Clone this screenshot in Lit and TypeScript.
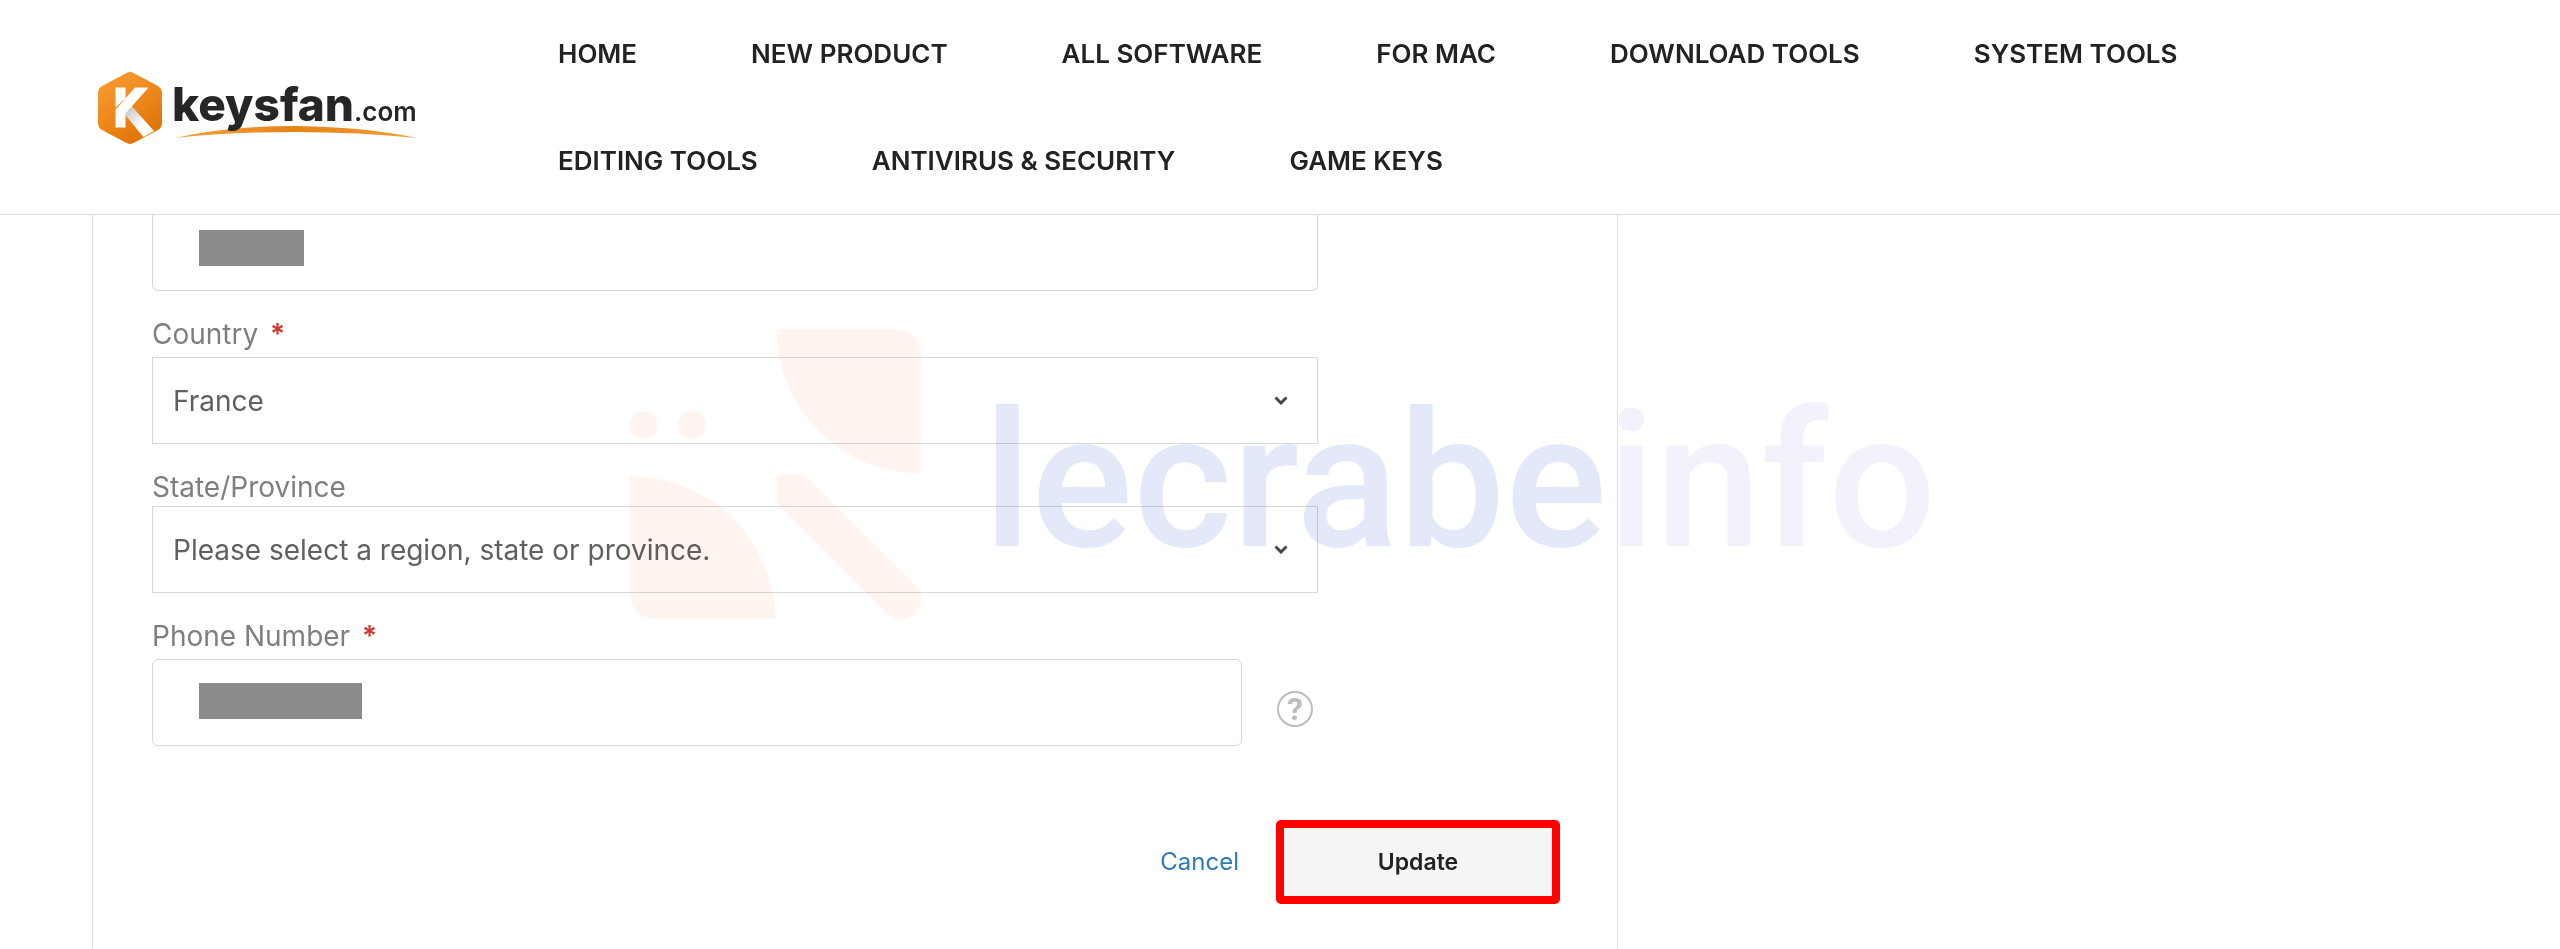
import { LitElement, html, css } from "lit";
import { customElement } from "lit/decorators.js";

const NAV = [
  "HOME",
  "NEW PRODUCT",
  "ALL SOFTWARE",
  "FOR MAC",
  "DOWNLOAD TOOLS",
  "SYSTEM TOOLS",
  "EDITING TOOLS",
  "ANTIVIRUS & SECURITY",
  "GAME KEYS",
];

@customElement("site-header")
export class SiteHeader extends LitElement {
  static styles = css`
    :host {
      display: block;
      border-bottom: 1px solid #dedede;
      background: #fff;
    }
    .bar {
      display: flex;
      align-items: center;
      gap: 140px;
      padding: 0 92px 0 98px;
    }
    .logo {
      flex: none;
      display: block;
    }
    .logo svg {
      display: block;
    }
    .word {
      font-family: Inter, "Open Sans", sans-serif;
      fill: #262626;
    }
    .name {
      font-size: 46px;
      font-weight: 800;
    }
    .tld {
      font-size: 26px;
      font-weight: 600;
    }
    .menu {
      display: flex;
      flex-wrap: wrap;
      column-gap: 114px;
      list-style: none;
      margin: 0;
      padding: 0;
      max-width: 1800px;
    }
    .item {
      color: #222;
      font: 600 26px/107px Inter, "Open Sans", sans-serif;
      text-decoration: none;
      white-space: nowrap;
    }
  `;

  render() {
    return html`
      <header class="bar">
        <a class="logo" href="#" aria-label="keysfan.com">
          <svg width="320" height="76" viewBox="0 0 320 76">
            <defs>
              <linearGradient id="hex" x1="0" y1="0" x2="0.6" y2="1">
                <stop offset="0" stop-color="#f7a13c" />
                <stop offset="0.5" stop-color="#f08a1c" />
                <stop offset="1" stop-color="#e07408" />
              </linearGradient>
              <linearGradient id="leg" x1="0" y1="0" x2="1" y2="1">
                <stop offset="0.15" stop-color="#cfcfcf" />
                <stop offset="0.6" stop-color="#ffffff" />
              </linearGradient>
              <linearGradient id="swoosh" x1="0" y1="0" x2="1" y2="0">
                <stop offset="0" stop-color="#f3a23d" />
                <stop offset="0.5" stop-color="#e98317" />
                <stop offset="1" stop-color="#f0a040" />
              </linearGradient>
            </defs>
            <path
              fill="url(#hex)"
              d="M28 4.200Q32 2 36 4.200L60 17Q64 19.500 64 24V54Q64 58.500 60 61L36 73.800Q32 76 28 73.800L4 61Q0 58.500 0 54V24Q0 19.500 4 17Z"
            />
            <path fill="url(#leg)" d="M26.500 45L34 37.500L56 62L45.500 68Z" />
            <path fill="#fff" d="M17.500 18.500H27.500V29L17.500 38.500Z" />
            <path fill="#fff" d="M37 18.500H50.500L27.500 44.500V58.500H17.500V40.500Z" />
            <path fill="url(#swoosh)" d="M77 69Q130 57 198 57Q270 58 319 69Q260 63 198 63Q130 63 77 69Z" />
            <text class="word" y="52">
              <tspan class="name" x="74">keysfan</tspan><tspan class="tld">.com</tspan>
            </text>
          </svg>
        </a>
        <nav aria-label="Main">
          <ul class="menu">
            ${NAV.map((label) => html`<li><a class="item" href="#">${label}</a></li>`)}
          </ul>
        </nav>
      </header>
    `;
  }
}

@customElement("address-form")
export class AddressForm extends LitElement {
  static styles = css`
    :host {
      flex: 1;
      display: block;
      box-sizing: border-box;
      max-width: 1526px;
      margin: 0 92px;
      padding: 0 57px 44px 59px;
      border: 1px solid #dedede;
      border-width: 0 1px;
      font-family: Inter, "Open Sans", sans-serif;
    }
    .fields {
      display: grid;
      gap: 24px;
      max-width: 1166px;
    }
    .label {
      display: block;
      color: #7d7f82;
      font-size: 28px;
      line-height: 38px;
    }
    .required {
      padding-bottom: 4px;
    }
    .star {
      margin-left: 4px;
      color: #d1372f;
      font-weight: 600;
    }
    .control {
      display: grid;
      align-items: center;
    }
    .control > * {
      grid-area: 1 / 1;
    }
    .box {
      box-sizing: border-box;
      width: 100%;
      height: 87px;
      margin: 0;
      padding: 0 20px;
      border: 1px solid #d8d8d8;
      background: #fff;
      color: #5f6062;
      font: 400 28px/36px Inter, "Open Sans", sans-serif;
      appearance: none;
    }
    .rounded {
      border-radius: 6px;
    }
    .cut {
      height: 76px;
      border-top: 0;
      border-radius: 0 0 6px 6px;
    }
    .mask {
      width: 105px;
      height: 36px;
      margin: 0 0 10px 47px;
      background: #8c8b89;
      pointer-events: none;
    }
    .long {
      width: 163px;
      margin-bottom: 3px;
    }
    .chevron {
      justify-self: end;
      margin-right: 30px;
      pointer-events: none;
    }
    .phone {
      display: flex;
      align-items: center;
      gap: 35px;
    }
    .phone .control {
      flex: 1;
    }
    .help {
      display: block;
      padding: 12px 5px 0 0;
      border: 0;
      background: none;
    }
    .help svg {
      display: block;
    }
    .help text {
      font: 700 32px Roboto, sans-serif;
      fill: #bdbdbd;
    }
    .actions {
      display: flex;
      justify-content: flex-end;
      align-items: center;
      gap: 37px;
      margin-top: 74px;
    }
    .cancel {
      color: #2b7bb9;
      font-size: 24px;
      line-height: 32px;
      text-decoration: none;
    }
    .update {
      box-sizing: border-box;
      width: 284px;
      height: 84px;
      border: 8px solid #fe0000;
      border-radius: 5px;
      background: #f5f5f5;
      color: #222;
      font: 600 23px/32px Inter, "Open Sans", sans-serif;
    }
  `;

  private chevron() {
    return html`<svg class="chevron" width="14" height="9" viewBox="0 0 14 9" aria-hidden="true">
      <path d="M1.500 1.500L7 7L12.500 1.500" fill="none" stroke="#484848" stroke-width="3" />
    </svg>`;
  }

  render() {
    return html`
      <form>
        <div class="fields">
          <div class="control">
            <input class="box cut" type="text" aria-label="Zip/Postal Code" />
            <span class="mask"></span>
          </div>
          <div>
            <label class="label required" for="country">Country <span class="star">*</span></label>
            <div class="control">
              <select class="box" id="country">
                <option>France</option>
              </select>
              ${this.chevron()}
            </div>
          </div>
          <div>
            <label class="label" for="region">State/Province</label>
            <div class="control">
              <select class="box" id="region">
                <option>Please select a region, state or province.</option>
              </select>
              ${this.chevron()}
            </div>
          </div>
          <div>
            <label class="label required" for="phone">Phone Number <span class="star">*</span></label>
            <div class="phone">
              <div class="control">
                <input class="box rounded" id="phone" type="tel" />
                <span class="mask long"></span>
              </div>
              <button class="help" type="button" aria-label="Help">
                <svg width="36" height="36" viewBox="0 0 36 36">
                  <circle cx="18" cy="18" r="17" fill="none" stroke="#bdbdbd" stroke-width="2" />
                  <text x="18" y="29" text-anchor="middle">?</text>
                </svg>
              </button>
            </div>
          </div>
        </div>
        <div class="actions">
          <a class="cancel" href="#">Cancel</a>
          <button class="update" type="button">Update</button>
        </div>
      </form>
    `;
  }
}

@customElement("app-root")
export class AppRoot extends LitElement {
  static styles = css`
    :host {
      display: flex;
      flex-direction: column;
      position: relative;
      min-height: 100vh;
      background: #fff;
    }
    .content {
      flex: 1;
      display: flex;
    }
    .watermark {
      position: absolute;
      inset: 0;
      display: flex;
      align-items: center;
      justify-content: center;
      gap: 62px;
      padding-left: 6px;
      mix-blend-mode: multiply;
      pointer-events: none;
      overflow: hidden;
    }
    .crab {
      flex: none;
      fill: #fff4ef;
    }
    .brand {
      padding-top: 12px;
      color: #e4e9f9;
      font: 500 190px/190px Roboto, sans-serif;
    }
    .info {
      color: #f2f2fd;
    }
  `;

  render() {
    return html`
      <site-header></site-header>
      <main class="content"><address-form></address-form></main>
      <div class="watermark" aria-hidden="true">
        <svg class="crab" width="291" height="292" viewBox="0 0 291 292">
          <circle cx="13.500" cy="96" r="13.800" />
          <circle cx="62" cy="96" r="14" />
          <path d="M146.500 0H264Q291 1 291 27V144.500A144.500 144.500 0 0 1 146.500 0Z" />
          <path d="M0 147A145 145 0 0 1 145.500 290H27Q1 289 0 263Z" />
          <path d="M147 146H174L288 259Q291 262 291 269Q290 288 270 291Q263 291 259 287L147 175Z" />
        </svg>
        <span class="brand">lecrabe<span class="info">info</span></span>
      </div>
    `;
  }
}
